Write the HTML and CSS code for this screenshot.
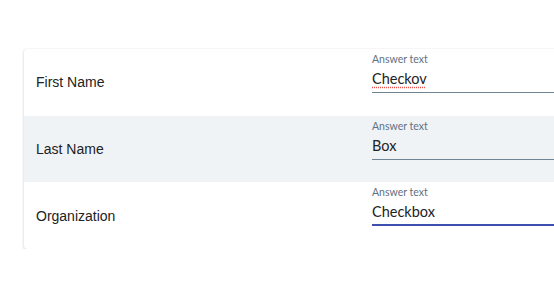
FILE: index.html
```html
<!DOCTYPE html>
<html lang="en">
<head>
    <meta charset="UTF-8">
    <meta name="viewport" content="width=device-width, initial-scale=1.0">
    <title>Contact form</title>

    <link rel="stylesheet" href="styles.css">
</head>
<body>
    <!-- Card with the three answer rows -->
    <section class="card">
        <div class="row">
            <div class="question">First Name</div>
            <div class="field">
                <label class="fieldLabel">Answer text</label>
                <div class="fieldValue"><span class="misspelled">Checkov</span></div>
            </div>
        </div>
        <div class="row shaded">
            <div class="question">Last Name</div>
            <div class="field">
                <label class="fieldLabel">Answer text</label>
                <div class="fieldValue">Box</div>
            </div>
        </div>
        <div class="row">
            <div class="question">Organization</div>
            <div class="field focused">
                <label class="fieldLabel">Answer text</label>
                <div class="fieldValue">Checkbox</div>
            </div>
        </div>
    </section>
</body>
</html>
```

FILE: styles.css
```css
* {
    margin: 0;
    box-sizing: border-box;
}

body {
    padding: 49px 0 0 24px;
    overflow: hidden;
    background-color: #fff;
}

.card {
    width: 600px;
    background-color: #fff;
    border-radius: 3px;
    box-shadow: 0 1px 3px rgba(0, 0, 0, 0.2), 0 0 1px rgba(0, 0, 0, 0.1);
}

.row {
    display: flex;
    align-items: center;
    height: 66.7px;
}

.shaded {
    background-color: #f0f3f6;
}

.question {
    width: 348px;
    padding-left: 12px;
    font-family: "Liberation Sans", Arial, sans-serif;
    font-size: 14px;
    color: #222;
}

.field {
    flex: 1;
    align-self: flex-start;
    padding-top: 4px;
    font-family: Lato, sans-serif;
}

.fieldLabel {
    display: block;
    font-size: 10.5px;
    line-height: 12px;
    color: #627183;
}

.fieldValue {
    padding: 4px 0 3px;
    font-size: 14.5px;
    line-height: 20px;
    color: #222;
    border-bottom: 1px solid #6f8596;
}

.focused .fieldValue {
    padding-bottom: 2px;
    border-bottom: 2px solid #3f4fb0;
}

.misspelled {
    text-decoration: underline dotted #ef5350;
    text-underline-offset: 3px;
}
```
